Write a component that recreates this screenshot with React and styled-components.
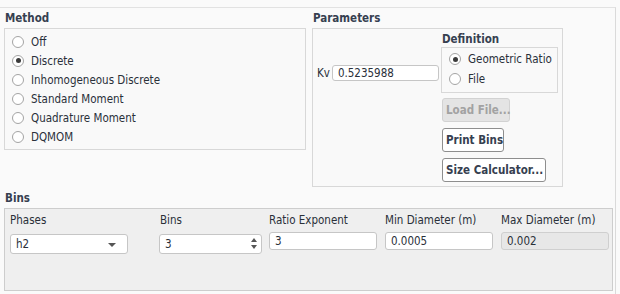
import React from "react";
import styled, { createGlobalStyle } from "styled-components";

const GlobalStyle = createGlobalStyle`
  html, body { margin: 0; padding: 0; background: #fafafa; }
  body {
    font-family: "DejaVu Sans Condensed", "DejaVu Sans", sans-serif;
    font-stretch: condensed;
    font-size: 11.5px;
    color: #2a3039;
  }
`;

// ---------- Layout ----------
const Panel = styled.div`
  margin-top: 7px;
  width: 616px;
  height: 287px;
  box-sizing: border-box;
  border-top: 1px solid #e2e2e2;
  border-right: 1px solid #dadada;
  padding-left: 4px;
  display: flex;
  flex-direction: column;
`;

const TopRow = styled.div`
  display: flex;
  align-items: flex-start;
  gap: 6px;
`;

const Group = styled.div`
  display: flex;
  flex-direction: column;
  margin-top: ${p => p.top || 0}px;
`;

const GroupTitle = styled.div`
  height: ${p => p.h || 20}px;
  line-height: ${p => p.h || 20}px;
  padding-left: 1px;
  font-weight: bold;
  color: #364050;
  margin-top: ${p => p.top || 0}px;
`;

const Box = styled.div`
  box-sizing: border-box;
  width: ${p => p.w}px;
  height: ${p => p.h}px;
  border: 1px solid ${p => p.grey ? "#cdcdcd" : "#d8d8d8"};
  background: ${p => p.grey ? "#efefef" : "#f9f9f9"};
  padding: ${p => p.pad || "0"};
`;

// ---------- Radios ----------
const RadioRow = styled.div`
  height: ${p => p.h || 19}px;
  display: flex;
  align-items: center;
  gap: 7px;
  white-space: nowrap;
`;

const RadioCircle = styled.span`
  width: 12px;
  height: 12px;
  box-sizing: border-box;
  border-radius: 50%;
  border: 1px solid #a4a4a4;
  background: #fff;
  display: flex;
  align-items: center;
  justify-content: center;
  &::after {
    content: "";
    width: 5px;
    height: 5px;
    border-radius: 50%;
    background: ${p => p.checked ? "#3a3a3a" : "transparent"};
  }
`;

function Radio({ label, checked, h }) {
  return (
    <RadioRow h={h}>
      <RadioCircle checked={checked} />
      <span>{label}</span>
    </RadioRow>
  );
}

// ---------- Parameters ----------
const ParamsInner = styled.div`
  display: flex;
  height: 100%;
`;

const KvRow = styled.div`
  display: flex;
  align-items: center;
  gap: 2px;
  padding-left: 4px;
  margin-top: 36px;
  height: 16px;
`;

const TextField = styled.div`
  box-sizing: border-box;
  width: ${p => p.w}px;
  height: ${p => p.h || 18}px;
  border: 1px solid ${p => p.disabled ? "#cfcfcf" : "#c6c6c6"};
  border-radius: 3px;
  background: ${p => p.disabled ? "#e7e7e7" : "#fff"};
  padding-left: 5px;
  display: flex;
  align-items: center;
  position: relative;
  margin-top: ${p => p.top || 0}px;
`;

const DefColumn = styled.div`
  margin-left: auto;
  width: 118px;
  padding-right: 3px;
  display: flex;
  flex-direction: column;
`;

const ButtonStack = styled.div`
  display: flex;
  flex-direction: column;
  align-items: flex-start;
  gap: 6px;
  margin-top: 5px;
  padding-left: 1px;
`;

const Button = styled.div`
  box-sizing: border-box;
  width: ${p => p.w}px;
  height: 24px;
  border: 1px solid ${p => p.disabled ? "#d2d2d2" : "#8e8e8e"};
  border-radius: 3px;
  background: ${p => p.disabled ? "#e4e4e4" : "#fff"};
  color: ${p => p.disabled ? "#a2a2a2" : "#364050"};
  font-weight: bold;
  display: flex;
  align-items: center;
  padding-left: 3px;
  white-space: nowrap;
`;

// ---------- Bins ----------
const Columns = styled.div`
  display: flex;
  padding-left: 5px;
`;

const Column = styled.div`
  width: ${p => p.w}px;
  margin-left: ${p => p.gap || 0}px;
  display: flex;
  flex-direction: column;
`;

const Header = styled.div`
  height: 16px;
  line-height: 16px;
  margin-top: 3px;
  padding-left: ${p => p.indent || 0}px;
  white-space: nowrap;
`;

const DropArrow = styled.span`
  position: absolute;
  right: 11px;
  top: 8px;
  width: 0;
  height: 0;
  border-left: 4px solid transparent;
  border-right: 4px solid transparent;
  border-top: 4px solid #555;
`;

const SpinArrows = styled.span`
  position: absolute;
  right: 4px;
  top: 3px;
  display: flex;
  flex-direction: column;
  gap: 3px;
  &::before, &::after {
    content: "";
    width: 0;
    height: 0;
    border-left: 3.5px solid transparent;
    border-right: 3.5px solid transparent;
  }
  &::before { border-bottom: 4px solid #555; }
  &::after { border-top: 4px solid #555; }
`;

const methods = ["Off", "Discrete", "Inhomogeneous Discrete", "Standard Moment", "Quadrature Moment", "DQMOM"];

export default function App() {
  return (
    <>
      <GlobalStyle />
      <Panel>
        <TopRow>
          <Group>
            <GroupTitle>Method</GroupTitle>
            <Box w={302} h={122} pad="3px 0 0 7px">
              {methods.map(m => <Radio key={m} label={m} checked={m === "Discrete"} />)}
            </Box>
          </Group>
          <Group>
            <GroupTitle>Parameters</GroupTitle>
            <Box w={251} h={159}>
              <ParamsInner>
                <KvRow>
                  <span>Kv</span>
                  <TextField w={107} h={16}>0.5235988</TextField>
                </KvRow>
                <DefColumn>
                  <GroupTitle h={15} top={3}>Definition</GroupTitle>
                  <Box w={117} h={46} pad="1px 0 0 7px">
                    <Radio label="Geometric Ratio" checked h={20} />
                    <Radio label="File" h={20} />
                  </Box>
                  <ButtonStack>
                    <Button w={68} disabled>Load File...</Button>
                    <Button w={62}>Print Bins</Button>
                    <Button w={104}>Size Calculator...</Button>
                  </ButtonStack>
                </DefColumn>
              </ParamsInner>
            </Box>
          </Group>
        </TopRow>
        <Group top={1}>
          <GroupTitle>Bins</GroupTitle>
          <Box w={609} h={83} grey>
            <Columns>
              <Column w={118}>
                <Header>Phases</Header>
                <TextField w={118} h={20} top={6}>h2<DropArrow /></TextField>
              </Column>
              <Column w={103} gap={31}>
                <Header indent={1}>Bins</Header>
                <TextField w={103} h={20} top={6}>3<SpinArrows /></TextField>
              </Column>
              <Column w={108} gap={7}>
                <Header indent={-1}>Ratio Exponent</Header>
                <TextField w={108} top={4}>3</TextField>
              </Column>
              <Column w={108} gap={8}>
                <Header indent={-2}>Min Diameter (m)</Header>
                <TextField w={108} top={4}>0.0005</TextField>
              </Column>
              <Column w={108} gap={8}>
                <Header indent={-2}>Max Diameter (m)</Header>
                <TextField w={108} top={4} disabled>0.002</TextField>
              </Column>
            </Columns>
          </Box>
        </Group>
      </Panel>
    </>
  );
}
